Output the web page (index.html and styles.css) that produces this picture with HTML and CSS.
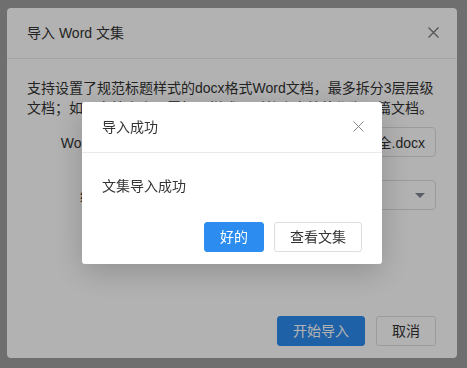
FILE: index.html
```html
<!DOCTYPE html>
<html lang="zh-CN">
<head>
<meta charset="utf-8">
<title>导入 Word 文集</title>
<link rel="stylesheet" href="styles.css">
</head>
<body>
<div class="page">
  <div class="dialog">
    <div class="dialog-header">
      <span class="dialog-title">导入 Word 文集</span>
      <span class="close close-back">
        <svg width="11" height="11" viewBox="0 0 11 11"><path d="M0.5 0.5 L10.5 10.5 M10.5 0.5 L0.5 10.5" stroke="currentColor" stroke-width="1.2" fill="none"/></svg>
      </span>
    </div>
    <div class="dialog-body">
      <p class="tip">支持设置了规范标题样式的docx格式Word文档，最多拆分3层层级文档；如果文档中未设置标题样式，则整个文档将作为一篇文档。</p>
      <div class="form-item">
        <label class="form-label">Word文档</label>
        <div class="input"><span class="input-text">计算机网络基础知识常见问题大全.docx</span></div>
      </div>
      <div class="form-item">
        <label class="form-label">编辑器</label>
        <div class="input select">
          <span class="caret"></span>
        </div>
      </div>
    </div>
    <div class="dialog-footer">
      <button class="btn btn-primary">开始导入</button>
      <button class="btn">取消</button>
    </div>
  </div>
</div>
<div class="mask">
  <div class="modal">
    <div class="modal-header">
      <span class="modal-title">导入成功</span>
      <span class="close close-front">
        <svg width="11" height="11" viewBox="0 0 11 11"><path d="M0.5 0.5 L10.5 10.5 M10.5 0.5 L0.5 10.5" stroke="currentColor" stroke-width="1" fill="none"/></svg>
      </span>
    </div>
    <div class="modal-body">文集导入成功</div>
    <div class="modal-footer">
      <button class="btn btn-primary">好的</button>
      <button class="btn">查看文集</button>
    </div>
  </div>
</div>
</body>
</html>
```

FILE: styles.css
```css
* { box-sizing: border-box; }
html, body {
  margin: 0;
  padding: 0;
  width: 467px;
  height: 368px;
  overflow: hidden;
}
body {
  background: #9f9f9f;
  font-family: "Liberation Sans", "Noto Sans CJK SC", sans-serif;
  font-size: 14px;
  color: #333;
}
.page {
  padding: 8px 10px 10px 7px;
}
.dialog {
  width: 450px;
  height: 350px;
  background: #fff;
  border-radius: 4px;
  display: flex;
  flex-direction: column;
}
.dialog-header {
  height: 51px;
  border-bottom: 1px solid #e8eaec;
  display: flex;
  align-items: center;
  justify-content: space-between;
  padding: 0 18px 1px 20px;
}
.dialog-title {
  font-size: 14px;
  color: #333;
  line-height: 20px;
}
.close {
  display: flex;
  width: 11px;
  height: 11px;
}
.close-back { color: #777; }
.close-front { color: #888; }
.dialog-body {
  flex: 1;
  padding: 19px 21px 0 20px;
}
.tip {
  margin: 0;
  line-height: 20px;
  color: #333;
}
.form-item {
  display: flex;
  align-items: center;
  margin-top: 9px;
}
.form-item + .form-item {
  margin-top: 23px;
}
.form-label {
  width: 95px;
  text-align: right;
  margin-right: 12px;
  color: #333;
  white-space: nowrap;
}
.input {
  flex: 1;
  height: 30px;
  border: 1px solid #dcdee2;
  border-radius: 4px;
  display: flex;
  align-items: center;
  justify-content: flex-end;
  padding: 0 10px;
  color: #333;
  overflow: hidden;
  white-space: nowrap;
}
.caret {
  width: 0;
  height: 0;
  border-left: 5px solid transparent;
  border-right: 5px solid transparent;
  border-top: 5px solid #808695;
}
.dialog-footer {
  display: flex;
  justify-content: flex-end;
  gap: 11px;
  padding: 12px 21px 12px 20px;
}
.btn {
  height: 30px;
  padding: 0 15px;
  border: 1px solid #dcdee2;
  border-radius: 3px;
  background: #fff;
  color: #333;
  font-family: inherit;
  font-size: 14px;
  line-height: 28px;
}
.btn-primary {
  background: #2d8cf0;
  border-color: #2d8cf0;
  color: #fff;
}
.mask {
  position: fixed;
  inset: 0;
  background: rgba(0, 0, 0, 0.3);
  display: flex;
  align-items: center;
  justify-content: center;
}
.modal {
  width: 300px;
  height: 162px;
  margin-left: -3px;
  margin-top: -2px;
  background: #fff;
  border-radius: 3px;
  box-shadow: 0 8px 32px rgba(0, 0, 0, 0.2);
}
.modal-header {
  height: 51px;
  border-bottom: 1px solid #e8eaec;
  display: flex;
  align-items: center;
  justify-content: space-between;
  padding: 0 18px 1px 20px;
}
.modal-title {
  color: #333;
  line-height: 20px;
}
.modal-body {
  padding: 23px 20px 0;
  line-height: 20px;
  color: #333;
}
.modal-footer {
  display: flex;
  justify-content: flex-end;
  gap: 10px;
  padding: 26px 20px 12px;
}
```
